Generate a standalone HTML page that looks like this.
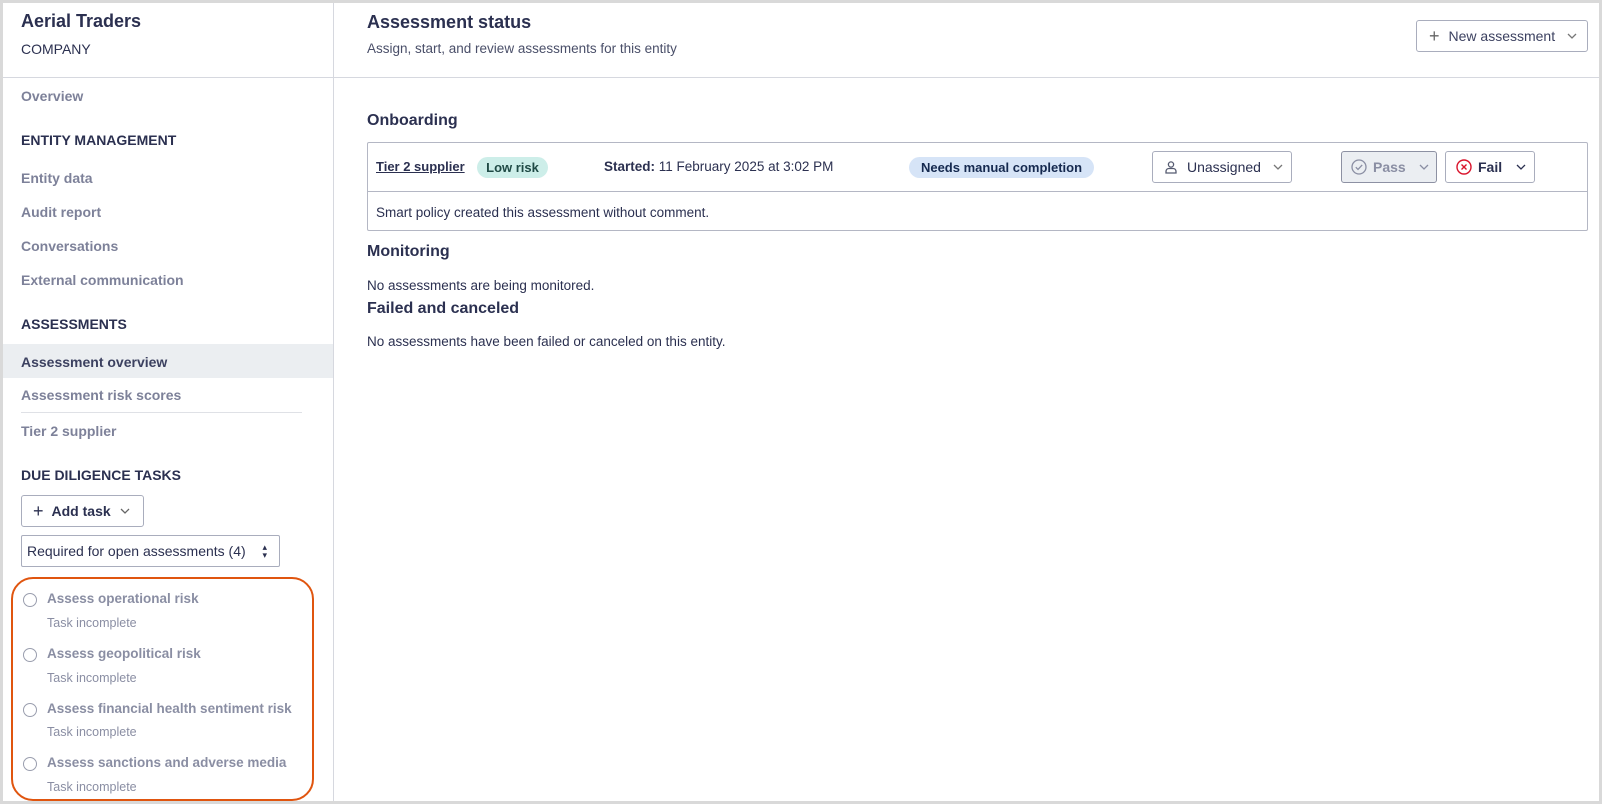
<!DOCTYPE html>
<html><head><meta charset="utf-8"><style>
*{box-sizing:border-box;margin:0;padding:0}
body{width:1602px;height:804px;background:#d9d9d9;font-family:"Liberation Sans",Arial,sans-serif;color:#2b3050;position:relative;overflow:hidden}
.frame{position:absolute;left:3px;top:3px;width:1596px;height:798px;background:#fff}
.a{position:absolute;white-space:nowrap}
.nav{font-size:14px;font-weight:bold;color:#7d8199}
.sec{font-size:14px;font-weight:bold;color:#2b3050}
.btn{position:absolute;border:1px solid #a9adbd;border-radius:3px;background:#fff;font-size:14px;display:flex;align-items:center}
.pill{position:absolute;border-radius:11px;font-size:13px;font-weight:bold;display:flex;align-items:center;justify-content:center}
.h2{font-size:16px;font-weight:bold}
.t{font-size:14px}
.radio{position:absolute;width:14px;height:14px;border:1.3px solid #9a9eae;border-radius:50%}
.tt{font-size:13.5px;font-weight:bold;color:#8a8ea3}
.ts{font-size:12.5px;color:#8a8ea3}
.chev{display:inline-block;width:10px;height:6px}
</style></head><body>
<svg width="0" height="0" style="position:absolute"><symbol id="cv" viewBox="0 0 10 6"><path d="M1 1l4 4 4-4" fill="none" stroke="currentColor" stroke-width="1.3"/></symbol></svg>
<div class="frame"></div>
<div class="a" style="left:333px;top:3px;width:1px;height:798px;background:#d6d8df"></div>
<div class="a" style="left:3px;top:77px;width:1596px;height:1px;background:#d6d8df"></div>

<div class="a" style="left:21px;top:11px;font-size:18px;font-weight:bold">Aerial Traders</div>
<div class="a" style="left:21px;top:41px;font-size:14px">COMPANY</div>
<div class="a nav" style="left:21px;top:88px">Overview</div>
<div class="a sec" style="left:21px;top:132px">ENTITY MANAGEMENT</div>
<div class="a nav" style="left:21px;top:170px">Entity data</div>
<div class="a nav" style="left:21px;top:204px">Audit report</div>
<div class="a nav" style="left:21px;top:238px">Conversations</div>
<div class="a nav" style="left:21px;top:272px">External communication</div>
<div class="a sec" style="left:21px;top:316px">ASSESSMENTS</div>
<div class="a" style="left:3px;top:344px;width:330px;height:34px;background:#ebeef1"></div>
<div class="a sec" style="left:21px;top:354px;color:#3c4160">Assessment overview</div>
<div class="a nav" style="left:21px;top:387px">Assessment risk scores</div>
<div class="a" style="left:21px;top:412px;width:281px;height:1px;background:#dfe1e6"></div>
<div class="a nav" style="left:21px;top:423px">Tier 2 supplier</div>
<div class="a sec" style="left:21px;top:467px">DUE DILIGENCE TASKS</div>
<div class="btn" style="left:21px;top:495px;width:123px;height:32px;font-weight:bold;padding-left:11px"><span style="font-weight:normal;font-size:18px;margin-right:8px">+</span>Add task<svg class="chev" style="margin-left:9px;color:#666"><use href="#cv"/></svg></div>
<div class="btn" style="left:21px;top:535px;width:259px;height:32px;padding-left:5px;border-radius:2px">Required for open assessments (4)<span style="position:absolute;right:12px;font-size:9px;line-height:8px">▴<br>▾</span></div>
<div class="a" style="left:11px;top:577px;width:303px;height:224px;border:2px solid #e0550f;border-radius:22px"></div>
<div class="radio" style="left:23px;top:593px"></div><div class="a tt" style="left:47px;top:591px">Assess operational risk</div><div class="a ts" style="left:47px;top:616px">Task incomplete</div>
<div class="radio" style="left:23px;top:648px"></div><div class="a tt" style="left:47px;top:646px">Assess geopolitical risk</div><div class="a ts" style="left:47px;top:671px">Task incomplete</div>
<div class="radio" style="left:23px;top:703px"></div><div class="a tt" style="left:47px;top:701px">Assess financial health sentiment risk</div><div class="a ts" style="left:47px;top:725px">Task incomplete</div>
<div class="radio" style="left:23px;top:757px"></div><div class="a tt" style="left:47px;top:755px">Assess sanctions and adverse media</div><div class="a ts" style="left:47px;top:780px">Task incomplete</div>

<div class="a" style="left:367px;top:12px;font-size:18px;font-weight:bold">Assessment status</div>
<div class="a" style="left:367px;top:41px;font-size:13.5px;color:#4a4f69">Assign, start, and review assessments for this entity</div>
<div class="btn" style="left:1416px;top:20px;width:172px;height:32px;padding-left:12px;color:#3c4160"><span style="font-size:18px;margin-right:9px;color:#666">+</span>New assessment<svg class="chev" style="margin-left:12px;color:#777"><use href="#cv"/></svg></div>

<div class="a h2" style="left:367px;top:112px">Onboarding</div>
<div class="a" style="left:367px;top:142px;width:1221px;height:89px;border:1px solid #b4b7c4;border-radius:2px"></div>
<div class="a" style="left:367px;top:191px;width:1221px;height:1px;background:#b4b7c4"></div>
<div class="a" style="left:376px;top:159px;font-size:13px;font-weight:bold;text-decoration:underline">Tier 2 supplier</div>
<div class="pill" style="left:477px;top:157px;width:71px;height:21px;background:#cdeee9;color:#1f4a45">Low risk</div>
<div class="a t" style="left:604px;top:159px;font-size:13.5px"><b>Started:</b> 11 February 2025 at 3:02 PM</div>
<div class="pill" style="left:909px;top:157px;width:185px;height:21px;background:#d6e4f7;color:#15294f">Needs manual completion</div>
<div class="btn" style="left:1152px;top:151px;width:140px;height:32px;padding-left:11px"><svg width="14" height="14" viewBox="0 0 14 14" style="margin-right:9px" fill="none" stroke="#555a70" stroke-width="1.3"><circle cx="7" cy="4.5" r="2.6"/><path d="M2 13v-1.5c0-2 1.5-3 3-3h4c1.5 0 3 1 3 3V13z"/></svg>Unassigned<svg class="chev" style="margin-left:12px;color:#777"><use href="#cv"/></svg></div>
<div class="btn" style="left:1341px;top:151px;width:96px;height:32px;padding-left:9px;background:#ebeef2;border-color:#8d91a3;color:#8a8ea3;font-weight:bold"><svg width="16" height="16" viewBox="0 0 16 16" style="margin-right:6px" fill="none" stroke="#8a8ea3" stroke-width="1.3"><circle cx="8" cy="8" r="7"/><path d="M4.8 8.2l2.2 2.2 4.2-4.5"/></svg>Pass<svg class="chev" style="margin-left:13px"><use href="#cv"/></svg></div>
<div class="btn" style="left:1445px;top:151px;width:90px;height:32px;padding-left:10px;font-weight:bold"><svg width="16" height="16" viewBox="0 0 16 16" style="margin-right:6px" fill="none" stroke="#d9132b" stroke-width="1.4"><circle cx="8" cy="8" r="7"/><path d="M5.5 5.5l5 5M10.5 5.5l-5 5"/></svg>Fail<svg class="chev" style="margin-left:14px;color:#2b3050"><use href="#cv"/></svg></div>
<div class="a t" style="left:376px;top:205px;font-size:13.5px">Smart policy created this assessment without comment.</div>

<div class="a h2" style="left:367px;top:243px">Monitoring</div>
<div class="a t" style="left:367px;top:278px;font-size:13.5px">No assessments are being monitored.</div>
<div class="a h2" style="left:367px;top:300px">Failed and canceled</div>
<div class="a t" style="left:367px;top:334px;font-size:13.5px">No assessments have been failed or canceled on this entity.</div>
</body></html>
